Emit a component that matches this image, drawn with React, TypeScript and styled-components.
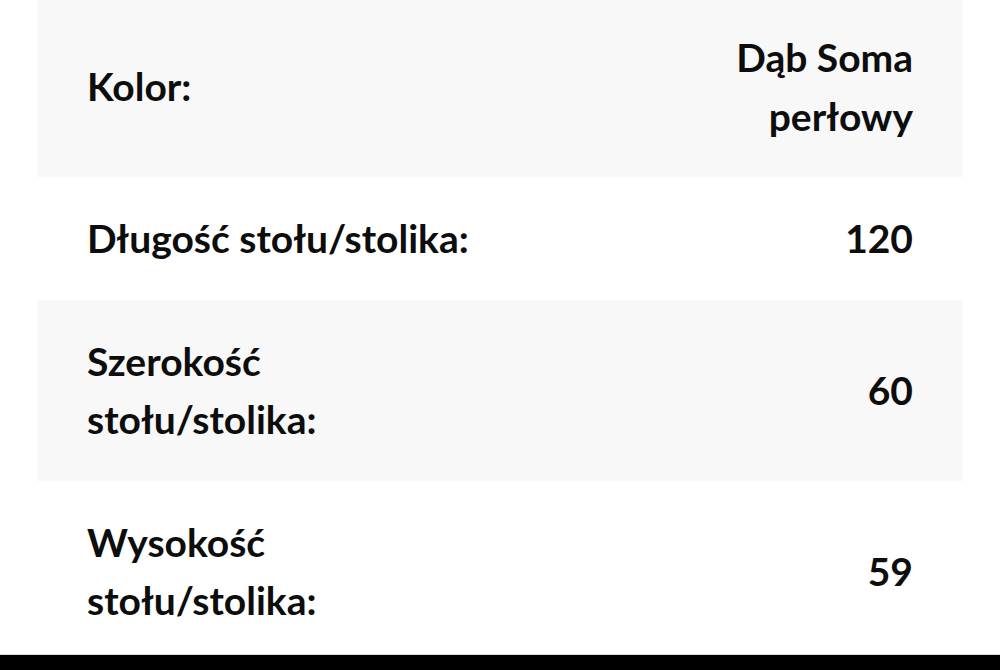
import styled, { createGlobalStyle } from "styled-components";

const GlobalStyle = createGlobalStyle`
  html, body {
    margin: 0;
    padding: 0;
    background: #ffffff;
    overflow: hidden;
  }
  body {
    font-family: Lato, "Open Sans", sans-serif;
    color: #0d0d0d;
  }
`;

const Page = styled.div`
  height: 670px;
  overflow: hidden;
`;

const Table = styled.div`
  display: flex;
  flex-direction: column;
  margin: -4px 37px 0;
`;

const Row = styled.div<{ $shaded: boolean }>`
  display: grid;
  grid-template-columns: 400px 1fr;
  align-items: center;
  padding: 32px 50px 32px 50px;
  background: ${({ $shaded }) => ($shaded ? "#f8f8f8" : "#ffffff")};
`;

const Label = styled.div`
  font-size: 39px;
  line-height: 58.5px;
  font-weight: 700;
`;

const Value = styled.div`
  justify-self: end;
  max-width: 250px;
  text-align: right;
  font-size: 39px;
  line-height: 58.5px;
  font-weight: 700;
`;

const BottomBar = styled.div`
  position: fixed;
  left: 0;
  right: 0;
  bottom: 0;
  height: 15px;
  background: #000000;
  border-top: 1px solid #d8d8d8;
`;

const rows = [
  { label: "Kolor:", value: "Dąb Soma perłowy" },
  { label: "Długość stołu/stolika:", value: "120" },
  { label: "Szerokość stołu/stolika:", value: "60" },
  { label: "Wysokość stołu/stolika:", value: "59" },
];

const App = () => {
  return (
    <Page>
      <GlobalStyle />
      <Table>
        {rows.map((row, i) => (
          <Row key={row.label} $shaded={i % 2 === 0}>
            <Label>{row.label}</Label>
            <Value>{row.value}</Value>
          </Row>
        ))}
      </Table>
      <BottomBar />
    </Page>
  );
};

export default App;
